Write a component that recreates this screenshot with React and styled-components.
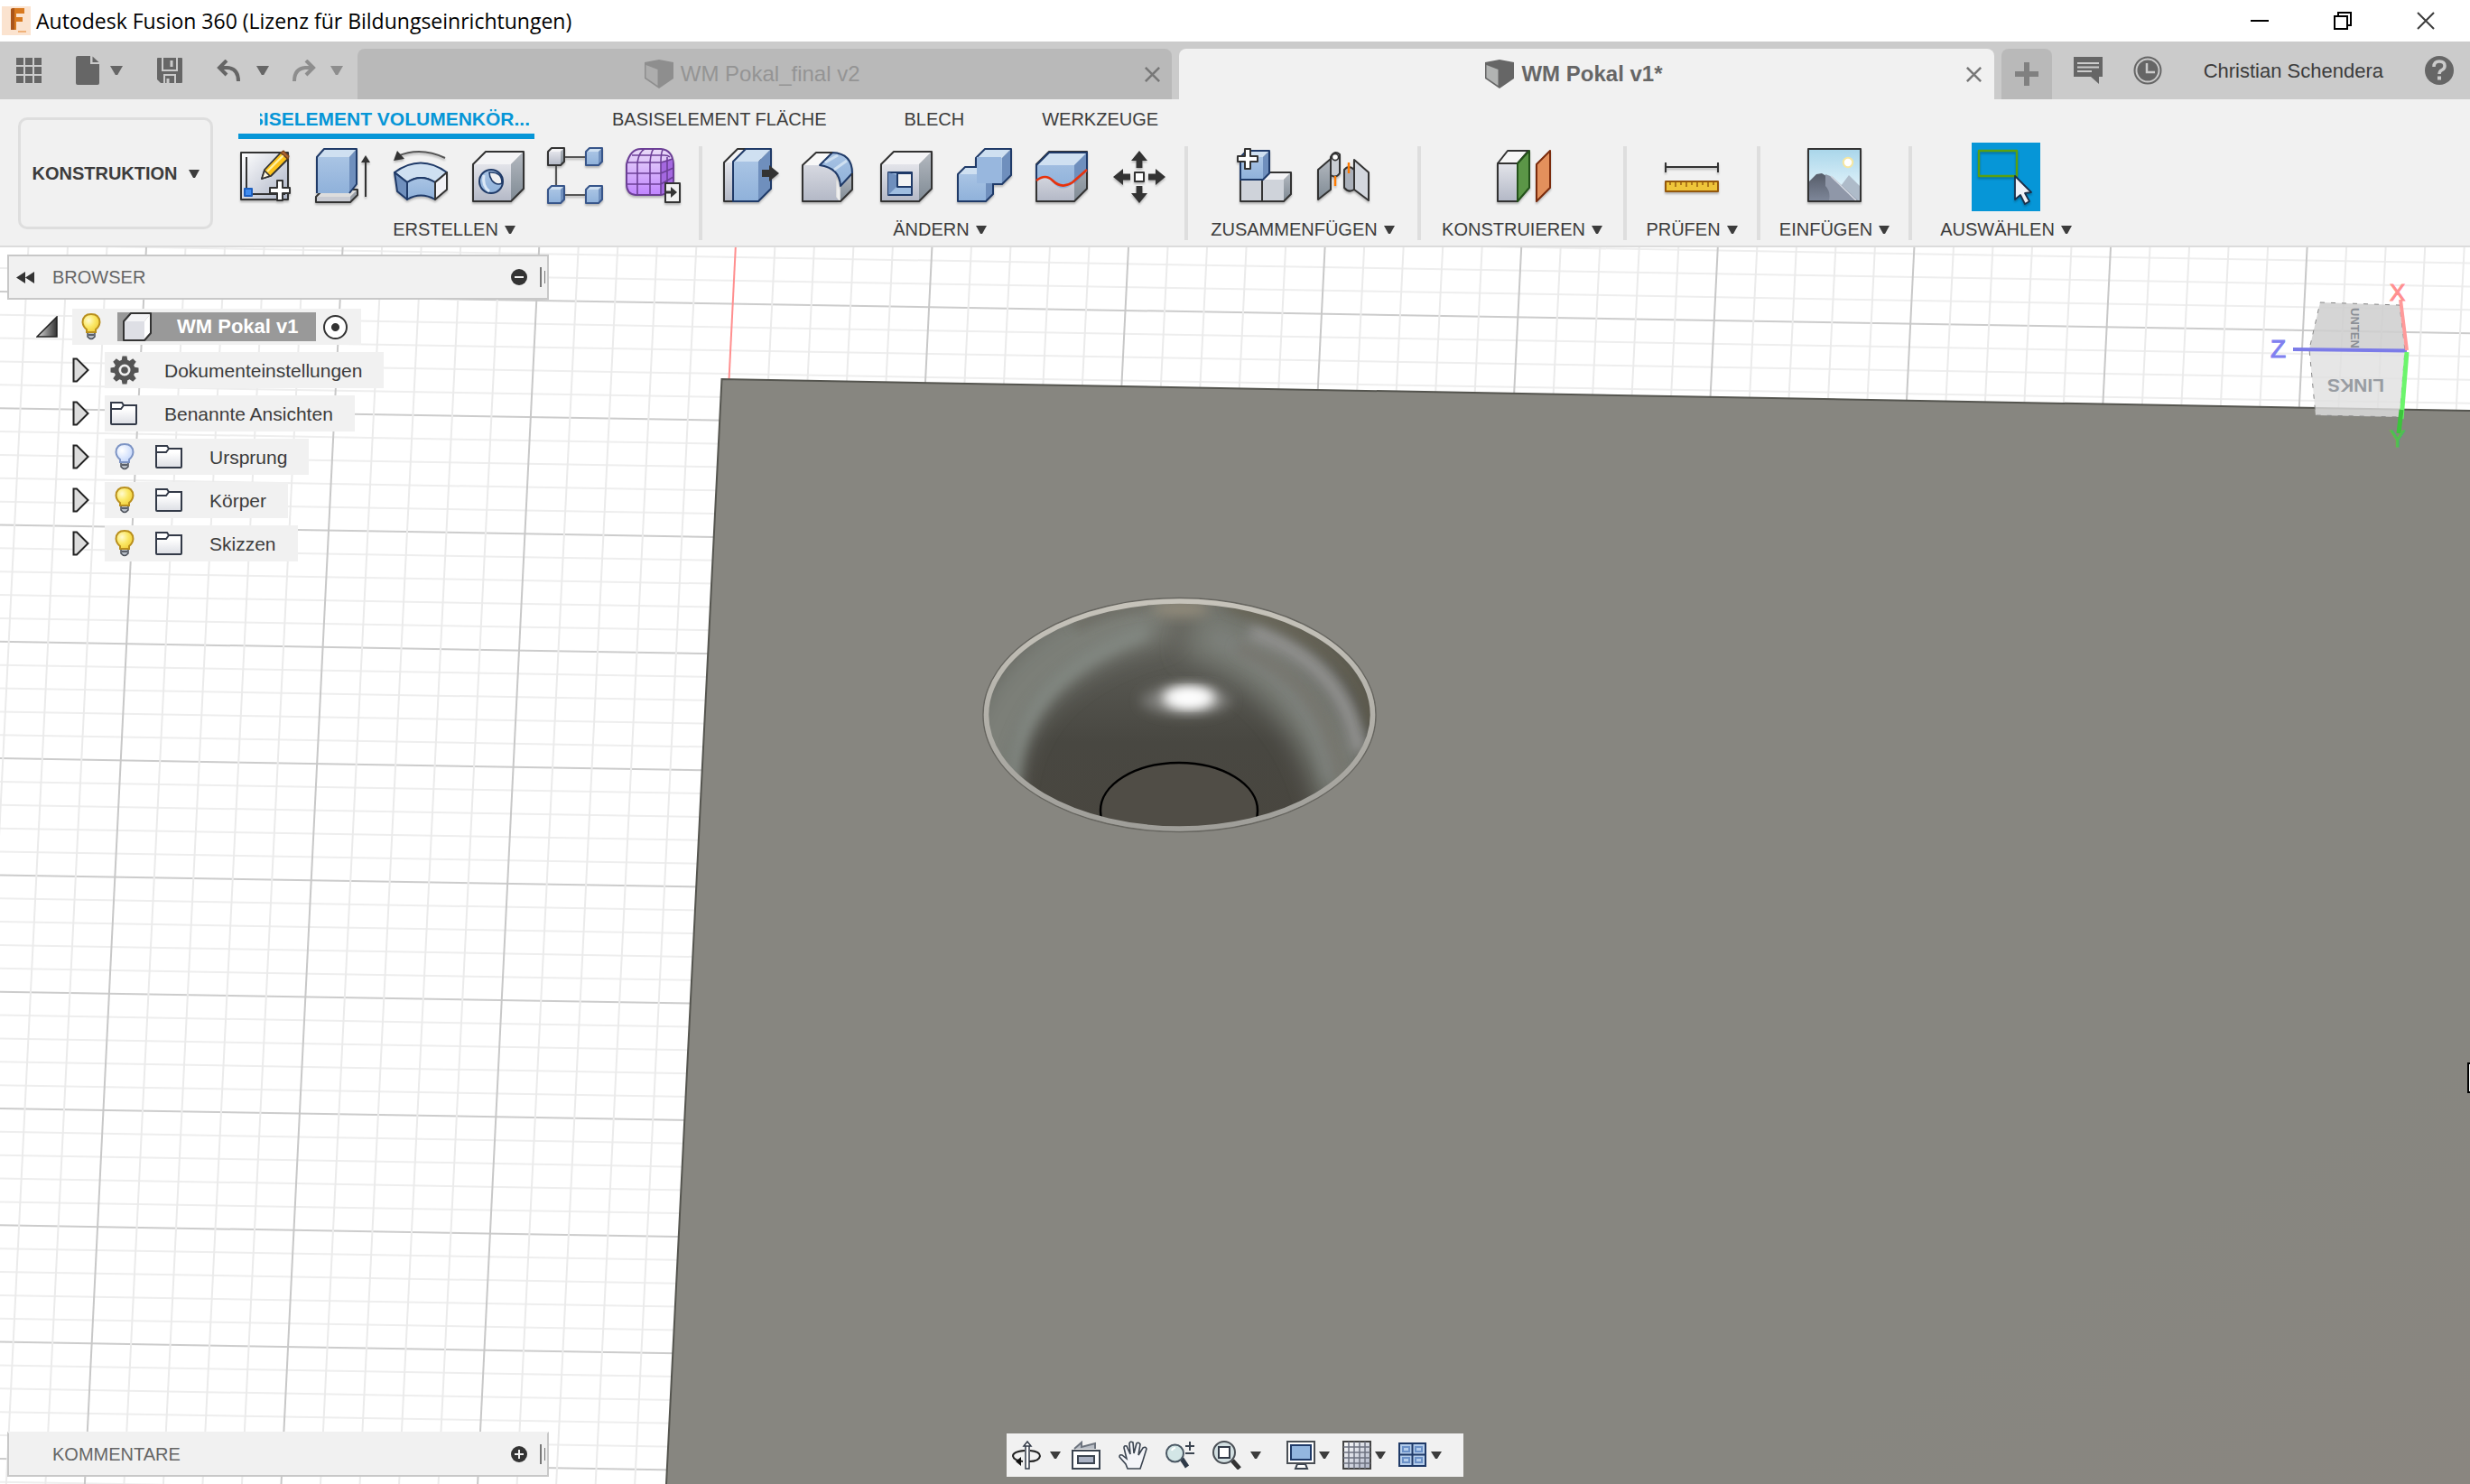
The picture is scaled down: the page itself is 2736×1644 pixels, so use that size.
import React from "react";
import styled, { createGlobalStyle, css } from "styled-components";

const Global = createGlobalStyle`
  * { box-sizing: border-box; }
  body {
    margin: 0;
    background: #ffffff;
    color: #3c3c3c;
    font-family: "Liberation Sans", Arial, sans-serif;
    font-size: 20px;
    line-height: 24px;
  }
  button {
    margin: 0;
    padding: 0;
    border: 0;
    background: none;
    color: inherit;
    font: inherit;
    cursor: pointer;
  }
  ul { margin: 0; padding: 0; list-style: none; }
  svg { display: block; flex: none; }
`;

/* ---------- layout ---------- */

const Page = styled.div`
  display: flex;
  flex-direction: column;
  min-height: 100vh;
`;

const TitleBar = styled.header`
  display: flex;
  align-items: center;
  height: 46px;
  padding: 0 3px 0 2px;
  gap: 6px;
  background: #ffffff;
`;

const Title = styled.h1`
  flex: 1;
  margin: 0;
  color: #000000;
  font: 400 23px/32px "Open Sans", "Noto Sans", sans-serif;
`;

const WindowButton = styled.button`
  display: flex;
  align-items: center;
  justify-content: center;
  width: 92px;
  height: 46px;
`;

const TabBar = styled.div`
  display: flex;
  height: 64px;
  background: #cbcbcb;
  color: #666666;
`;

const QuickAccess = styled.div`
  display: flex;
  align-items: center;
  gap: 38px;
  padding: 0 16px 0 18px;
`;

const ButtonCluster = styled.div`
  display: flex;
  align-items: center;
  gap: ${(p) => p.$gap}px;
`;

const PlainButton = styled.button`
  display: flex;
  align-items: center;
  gap: ${(p) => p.$gap || 0}px;
  color: ${(p) => (p.$muted ? "#8e8e8e" : "#666666")};
`;

const Documents = styled.div`
  flex: 1;
  display: flex;
  align-items: flex-end;
  gap: 8px;
`;

const DocumentTab = styled.div`
  flex: 1;
  display: flex;
  align-items: center;
  height: 56px;
  padding: 0 8px;
  border-radius: 8px 8px 0 0;
  background: ${(p) => (p.$active ? "#f1f1f1" : "#b9b9b9")};
  color: ${(p) => (p.$active ? "#666666" : "#949494")};
`;

const DocumentName = styled.button`
  flex: 1;
  display: flex;
  align-items: center;
  justify-content: center;
  gap: 8px;
  font-size: 24px;
  line-height: 28px;
  font-weight: ${(p) => (p.$active ? 700 : 400)};
`;

const TabClose = styled.button`
  display: flex;
  justify-content: center;
  width: 28px;
  color: #777777;
`;

const NewTab = styled.button`
  display: flex;
  align-items: center;
  justify-content: center;
  width: 56px;
  height: 56px;
  border-radius: 8px 8px 0 0;
  background: #b9b9b9;
  color: #808080;
`;

const Account = styled.div`
  display: flex;
  align-items: center;
  padding: 0 18px 0 24px;
  gap: 34px;
`;

const UserName = styled.button`
  padding: 2px 12px 0;
  color: #3c3c3c;
  font-size: 22px;
`;

const Ribbon = styled.div`
  display: flex;
  height: 164px;
  border-bottom: 2px solid #dcdcdc;
  background: #f1f1f1;
`;

const Workspace = styled.button`
  display: flex;
  align-items: center;
  justify-content: center;
  gap: 12px;
  width: 216px;
  height: 124px;
  margin: 20px 4px 0 20px;
  border: 3px solid #dedede;
  border-radius: 10px;
  font-weight: 700;
`;

const RibbonBody = styled.div`
  flex: 1;
  display: flex;
  flex-direction: column;
`;

const RibbonTabs = styled.div`
  display: flex;
  height: 44px;
  padding-left: 24px;
  gap: 86px;
`;

const RibbonTab = styled.button`
  display: flex;
  justify-content: flex-end;
  height: 44px;
  padding-top: 10px;
  white-space: nowrap;
  ${(p) =>
    p.$active &&
    css`
      width: 328px;
      padding-right: 5px;
      border-bottom: 6px solid #0696d7;
      color: #0696d7;
      font-size: 21px;
      font-weight: 700;
    `}
`;

const TabLabel = styled.span`
  display: flex;
  justify-content: flex-end;
  width: 299px;
  overflow: hidden;
`;

const Groups = styled.div`
  display: flex;
  padding-top: 8px;
`;

const Group = styled.div`
  display: flex;
  flex-direction: column;
  align-items: center;
  gap: 16px;
  width: ${(p) => p.$width}px;
  height: 104px;
  padding: ${(p) => (p.$wide ? "0 18px 0 10px" : "0")};
  border-right: ${(p) => (p.$last ? "0" : "4px solid #dedede")};
`;

const IconRow = styled.div`
  display: flex;
  gap: 22px;
  height: 64px;
  padding-left: ${(p) => (p.$wide ? 12 : 0)}px;
`;

const ToolButton = styled.button`
  display: flex;
  align-items: center;
  justify-content: center;
  height: 64px;
  width: 64px;
  svg { filter: drop-shadow(0 2px 1px rgba(0, 0, 0, 0.25)); }
`;

const SelectedTool = styled(ToolButton)`
  width: 76px;
  height: 76px;
  margin: -4px 0 -8px;
  background: #0696d7;
`;

const GroupLabel = styled.button`
  display: flex;
  align-items: center;
  gap: 7px;
  white-space: nowrap;
`;

const Viewport = styled.main`
  position: relative;
  flex: 1;
  display: flex;
  flex-direction: column;
  padding: 8px;
  overflow: hidden;
`;

const Scene = styled.svg`
  position: absolute;
  inset: 0;
  width: 100%;
  height: 100%;
`;

const CubeOverlay = styled.svg`
  position: absolute;
  top: 26px;
  right: 36px;
`;

const EdgeHandle = styled.div`
  position: absolute;
  top: 903px;
  right: 0;
  width: 3px;
  height: 34px;
  border: 2px solid #000000;
  border-right: 0;
  background: #ffffff;
`;

const Panel = styled.section`
  position: relative;
  display: flex;
  align-items: center;
  width: 600px;
  height: 50px;
  padding: 0 2px 0 8px;
  border: 2px solid #c8c8c8;
  border-top-color: ${(p) => (p.$open ? "#c8c8c8" : "#f1f1f1")};
  background: #f1f1f1;
`;

const PanelTitle = styled.h2`
  flex: 1;
  margin: 0;
  padding-left: ${(p) => (p.$indent ? 40 : 20)}px;
  color: #666666;
  font-size: 20px;
  font-weight: 400;
`;

const Grip = styled.span`
  display: flex;
  align-items: center;
  justify-content: space-between;
  width: 6px;
  margin-left: 14px;
  &::before,
  &::after {
    content: "";
    width: 2px;
    height: 22px;
    background: #777777;
  }
  &::after {
    width: 1px;
    height: 14px;
  }
`;

const Tree = styled.ul`
  position: relative;
  display: flex;
  flex-direction: column;
  gap: 8px;
  margin-top: 10px;
`;

const TreeRow = styled.li`
  display: flex;
  align-items: center;
  height: 40px;
  padding-left: ${(p) => (p.$root ? 32 : 72)}px;
  gap: ${(p) => (p.$root ? 16 : 17)}px;
`;

const Chip = styled.div`
  display: flex;
  align-items: center;
  gap: 18px;
  height: 40px;
  padding: ${(p) => (p.$root ? "0 15px 0 10px" : "0 24px 0 6px")};
  background: #f1f1f1;
`;

const IconSlot = styled.button`
  display: flex;
  justify-content: ${(p) => (p.$center ? "center" : "flex-start")};
  width: 32px;
`;

const NodeName = styled.button`
  padding: 2px 0 0 10px;
  font-size: 21px;
`;

const RootName = styled.button`
  display: flex;
  align-items: center;
  gap: 28px;
  height: 32px;
  padding: 0 20px 0 6px;
  background: #999999;
  color: #ffffff;
  font-size: 22px;
  font-weight: 700;
`;

const ActiveRadio = styled.input`
  appearance: none;
  width: 27px;
  height: 27px;
  margin: 0 0 0 -10px;
  border: 2px solid #333333;
  border-radius: 50%;
  background: radial-gradient(circle, #333333 4px, #ffffff 5px);
`;

const Footer = styled.div`
  position: relative;
  display: grid;
  grid-template-columns: 1fr auto 1fr;
  align-items: end;
  margin-top: auto;
`;

const NavBar = styled.div`
  display: flex;
  align-items: center;
  height: 48px;
  padding: 0 24px 0 6px;
  gap: 20px;
  background: #f1f1f1;
`;

const NavTools = styled.div`
  display: flex;
  gap: ${(p) => p.$gap}px;
  margin-left: ${(p) => p.$offset || 0}px;
`;

const NavButton = styled.button`
  display: flex;
  align-items: center;
  gap: ${(p) => p.$gap || 0}px;
`;

/* ---------- small icons ---------- */

const Caret = ({ w = 12, h = 9, color = "currentColor" }) => (
  <svg width={w} height={h} viewBox="0 0 12 9" preserveAspectRatio="none" aria-hidden="true">
    <path d="M0 0H12L7 9H5Z" fill={color} />
  </svg>
);

const AppLogo = () => (
  <svg width="32" height="32" viewBox="0 0 32 32" aria-hidden="true">
    <rect width="32" height="32" fill="#fbe3cf" />
    <path d="M10 4Q10 2 13 2H25V8H16V12H23V17H16V26H10Z" fill="#d8791f" />
    <path d="M10 4Q10 2 13 2H14V26H10Z" fill="#a9541a" />
    <path d="M18 27H27V29H18Z" fill="#f0b27a" />
  </svg>
);

const GridIcon = () => (
  <svg width="28" height="28" viewBox="0 0 28 28" aria-hidden="true">
    {[0, 10, 20].map((y) =>
      [0, 10, 20].map((x) => <rect key={`${x}-${y}`} x={x} y={y} width="8" height="8" fill="currentColor" />)
    )}
  </svg>
);

const FileIcon = () => (
  <svg width="26" height="32" viewBox="0 0 26 32" aria-hidden="true">
    <path d="M2 0H16V9H26V30Q26 32 24 32H2Q0 32 0 30V2Q0 0 2 0Z" fill="currentColor" />
    <path d="M18.5 0.5L25.5 7H18.5Z" fill="currentColor" />
  </svg>
);

const SaveIcon = () => (
  <svg width="28" height="28" viewBox="0 0 28 28" aria-hidden="true">
    <path d="M1 0H27Q28 0 28 1V27Q28 28 27 28H4L0 24V1Q0 0 1 0Z" fill="currentColor" />
    <path d="M6 0V14H22V0M8 28V19H20V28" fill="none" stroke="#cbcbcb" strokeWidth="2" />
    <path d="M16 3V10M12 23V28" stroke="#cbcbcb" strokeWidth="3" />
  </svg>
);

const UndoIcon = () => (
  <svg width="26" height="24" viewBox="0 0 26 24" fill="none" stroke="currentColor" strokeWidth="4" aria-hidden="true">
    <path d="M11 1L3 9L11 17M3 9H12Q24 10 24 24" />
  </svg>
);

const RedoIcon = () => (
  <svg width="26" height="24" viewBox="0 0 26 24" fill="none" stroke="currentColor" strokeWidth="4" aria-hidden="true">
    <path d="M15 1L23 9L15 17M23 9H14Q2 10 2 24" />
  </svg>
);

const DocCube = ({ active }) => (
  <svg width="32" height="32" viewBox="0 0 32 32" aria-hidden="true">
    <path d="M0 3L16 0L32 3V21L16 32L0 21Z" fill={active ? "#666666" : "#8e8e8e"} />
    <path d="M1.500 6L14.500 11V29L1.500 20Z" fill={active ? "#b2b4b3" : "#adadad"} />
  </svg>
);

const CrossIcon = ({ size = 17, stroke = 3 }) => (
  <svg width={size} height={size} viewBox="0 0 20 20" fill="none" stroke="currentColor" strokeWidth={stroke} aria-hidden="true">
    <path d="M1 1L19 19M19 1L1 19" />
  </svg>
);

const PlusIcon = () => (
  <svg width="26" height="26" viewBox="0 0 26 26" stroke="currentColor" strokeWidth="6" aria-hidden="true">
    <path d="M13 0V26M0 13H26" />
  </svg>
);

const CommentIcon = () => (
  <svg width="32" height="30" viewBox="0 0 32 30" aria-hidden="true">
    <path d="M0 0H32V22H28V30L19 22H0Z" fill="currentColor" />
    <path d="M4 7H28M4 11.500H28M4 16H20" stroke="#cbcbcb" strokeWidth="2" />
  </svg>
);

const ClockIcon = () => (
  <svg width="32" height="32" viewBox="0 0 32 32" aria-hidden="true">
    <circle cx="16" cy="16" r="14.500" fill="none" stroke="currentColor" strokeWidth="2" />
    <circle cx="16" cy="16" r="11.500" fill="currentColor" />
    <path d="M15 8V18H24" fill="none" stroke="#cbcbcb" strokeWidth="2.500" />
  </svg>
);

const HelpIcon = () => (
  <svg width="32" height="32" viewBox="0 0 32 32" aria-hidden="true">
    <circle cx="16" cy="16" r="16" fill="currentColor" />
    <path d="M10 12Q10 6 16 6Q22 6 22 11Q22 14 19 15.500Q16 17 16 20" fill="none" stroke="#cbcbcb" strokeWidth="3.500" />
    <rect x="14" y="22.500" width="4" height="4" fill="#cbcbcb" />
  </svg>
);

/* ---------- ribbon icons ---------- */

const Tool = ({ children, size = 64 }) => (
  <svg width={size} height={size} viewBox="0 0 32 32" strokeLinejoin="round" aria-hidden="true">
    {children}
  </svg>
);

const dark = "#333333";
const navy = "#1f3a68";

const HiddenDefs = styled.svg`
  position: absolute;
`;

const Defs = () => (
  <HiddenDefs width="0" height="0" aria-hidden="true">
    <defs>
      <linearGradient id="gGray" x1="0" y1="0" x2="0" y2="1">
        <stop offset="0" stopColor="#e3e4ea" /><stop offset="1" stopColor="#b3b8c6" />
      </linearGradient>
      <linearGradient id="gPaper" x1="0" y1="0" x2="1" y2="1">
        <stop offset="0" stopColor="#ffffff" /><stop offset="1" stopColor="#adb4c6" />
      </linearGradient>
      <linearGradient id="gFolder" x1="0" y1="0" x2="0" y2="1">
        <stop offset="0.3" stopColor="#ffffff" /><stop offset="1" stopColor="#dcdee4" />
      </linearGradient>
      <linearGradient id="gBlue" x1="0" y1="0" x2="0" y2="1">
        <stop offset="0" stopColor="#a9c4e4" /><stop offset="1" stopColor="#8fb1da" />
      </linearGradient>
      <linearGradient id="gSide" x1="0" y1="0" x2="0" y2="1">
        <stop offset="0" stopColor="#b4b9c0" /><stop offset="1" stopColor="#7f8a94" />
      </linearGradient>
      <linearGradient id="gForm" x1="0" y1="0" x2="0" y2="1">
        <stop offset="0" stopColor="#eadcf8" /><stop offset="1" stopColor="#c084ff" />
      </linearGradient>
      <linearGradient id="gSky" x1="0" y1="0" x2="0" y2="1">
        <stop offset="0" stopColor="#a9d6ea" /><stop offset="1" stopColor="#f2fbff" />
      </linearGradient>
      <linearGradient id="gMount" x1="0" y1="0" x2="0" y2="1">
        <stop offset="0" stopColor="#565c69" /><stop offset="1" stopColor="#7d8698" />
      </linearGradient>
      <linearGradient id="gMark" x1="0" y1="0" x2="1" y2="0">
        <stop offset="0" stopColor="#dddddd" /><stop offset="1" stopColor="#333333" />
      </linearGradient>
      <radialGradient id="gBulbOn" cx="0.35" cy="0.35" r="0.7">
        <stop offset="0" stopColor="#fffbd0" /><stop offset="0.5" stopColor="#fbe96a" /><stop offset="1" stopColor="#f1cf38" />
      </radialGradient>
      <radialGradient id="gBulbOff" cx="0.35" cy="0.35" r="0.7">
        <stop offset="0" stopColor="#ffffff" /><stop offset="1" stopColor="#c3d6fb" />
      </radialGradient>
    </defs>
  </HiddenDefs>
);

/* Extruded block: front face, top face, right face. */
const Block = ({ x = 2, y = 3, w = 28, h = 27.5, d = 7, front = "url(#gGray)", top = "#f4f4f6", side = "url(#gSide)", line = dark }) => (
  <g>
    <path d={`M${x} ${y + d}L${x + d} ${y}H${x + w}L${x + w - d} ${y + d}Z`} fill={top} />
    <path d={`M${x + w - d} ${y + d}L${x + w} ${y}V${y + h - d}L${x + w - d} ${y + h}Z`} fill={side} />
    <rect x={x} y={y + d} width={w - d} height={h - d} fill={front} />
    <path d={`M${x} ${y + d}L${x + d} ${y}H${x + w}V${y + h - d}L${x + w - d} ${y + h}H${x}Z`} fill="none" stroke={line} />
  </g>
);

const Plus = ({ x, y }) => (
  <path
    d={`M${x - 1.500} ${y - 5.500}h3v4h4v3h-4v4h-3v-4h-4v-3h4z`}
    fill="#ffffff"
    stroke={dark}
    strokeWidth="1"
  />
);

const SketchIcon = () => (
  <Tool>
    <rect x="2.500" y="3.500" width="26" height="26" fill="url(#gPaper)" stroke={dark} />
    <path d="M5.500 6V26.500H27" fill="none" stroke={dark} />
    <rect x="4.500" y="23.500" width="4" height="4" fill="#3f8cf0" stroke="#1d5fc0" />
    <path d="M14 18L15.500 13L24.500 3.500L28.500 7L19 16.500Z" fill="#fcc21a" stroke={dark} strokeWidth="0.900" />
    <path d="M17 14L26 5" stroke="#fff0a0" strokeWidth="1.200" />
    <path d="M24.500 3.500L26 2.500L29 5.500L28.500 7Z" fill="#b0652f" stroke="#7a4620" strokeWidth="0.600" />
    <path d="M14 18L15.500 13.500L18.500 16.500Z" fill="#fff7e0" stroke={dark} strokeWidth="0.800" />
    <Plus x={24} y={24.5} />
  </Tool>
);

const ExtrudeIcon = () => (
  <Tool>
    <Block x={1} y={24} w={23} h={7} d={4} front="#c9cbd2" top="#dddddd" side="#9aa0a8" />
    <path d="M1.500 6L5.500 1.500H23.500L19.500 6Z" fill="#cfe0f1" />
    <rect x="1.500" y="6" width="18" height="20" fill="url(#gBlue)" />
    <path d="M19.500 6L23.500 1.500V21L19.500 26Z" fill="#6f8fbd" />
    <path d="M1.500 26V6L5.500 1.500H23.500V21L19.500 26" fill="none" stroke={navy} />
    <path d="M28.500 28V8" stroke={dark} strokeWidth="1" />
    <path d="M28.500 5L31 9H26Z" fill={dark} />
  </Tool>
);

const RevolveIcon = () => (
  <Tool>
    <path d="M3 5.500Q16 0 29.500 6.500" fill="none" stroke="#555555" />
    <path d="M1 8L3 2.500L7 7Z" fill={dark} />
    <path d="M1.500 14.500Q16 4 30.500 14.500L24 20Q16 15 8.500 20Z" fill="#cfe0f1" stroke={navy} />
    <path d="M1.500 14.500L8.500 20V29.500L3 25Z" fill="#6f8fbd" stroke={navy} />
    <path d="M8.500 20Q16 15 24 20V29.500Q16 25 8.500 29.500Z" fill="url(#gBlue)" stroke={navy} />
    <path d="M24 20L30.500 14.500V24L24 29.500Z" fill="#f2f2f6" stroke={dark} />
  </Tool>
);

const HoleIcon = () => (
  <Tool>
    <Block />
    <ellipse cx="12" cy="19.500" rx="6.500" ry="6.500" fill="url(#gBlue)" stroke={navy} />
    <path d="M11 14.500Q18 14 18 20.500Q15 22 12.500 19Q11 17 11 14.500Z" fill="#f0f0f2" stroke={navy} strokeWidth="0.800" />
    <path d="M8 16Q7 22 11 25" stroke="#dbe8f6" fill="none" strokeWidth="1.500" />
  </Tool>
);

const PatternIcon = () => (
  <Tool>
    <path d="M10 6H22M5 11V22M10 27H22" stroke="#555555" strokeWidth="1" />
    <Block x={0.5} y={1} w={9} h={9.5} d={2} />
    <Block x={21.5} y={1} w={9} h={9.5} d={2} front="url(#gBlue)" top="#cfe0f1" side="#6f8fbd" line="#37558a" />
    <Block x={0.5} y={22} w={9} h={9.5} d={2} front="url(#gBlue)" top="#cfe0f1" side="#6f8fbd" line="#37558a" />
    <Block x={21.5} y={22} w={9} h={9.5} d={2} front="url(#gBlue)" top="#cfe0f1" side="#6f8fbd" line="#37558a" />
  </Tool>
);

const FormIcon = () => (
  <Tool>
    <path d="M1 10Q3 1.500 9 1.500H20Q26.500 2 27 10V19Q26 26 20 27H6Q1 26.500 1 21Z" fill="url(#gForm)" stroke="#6c3f96" />
    <path d="M20 9Q25 6 26.500 8V20Q25 25 20 26.500Z" fill="#a468e0" />
    <path d="M7 26.500V9Q8 3 11 1.500M14 26.500V9Q14.500 3 16 1.500M20 26.500V9Q20 4 21 2M1 9H20Q24 8 26.500 7M1 15H20L27 12M1 21H20L27 17M4 5H22Q24 5 25 6M23.500 25V6" fill="none" stroke="#6c3f96" strokeWidth="0.800" />
    <rect x="22.500" y="20.500" width="8" height="10.500" fill="#f1f1f1" stroke={dark} strokeWidth="1" />
    <path d="M23 25.500H27" stroke={dark} strokeWidth="1.500" />
    <path d="M25.500 22.500L29 25.500L25.500 28.500Z" fill={dark} />
  </Tool>
);

const PressPullIcon = () => (
  <Tool>
    <Block x={1} y={1.500} w={20} h={29} d={7.500} />
    <Block x={6} y={1.500} w={21} h={29} d={7} front="url(#gBlue)" top="#cfe0f1" side="#6f8fbd" line={navy} />
    <path d="M22 13H26V10.500L31.500 15L26 19.500V17H22Z" fill={dark} />
  </Tool>
);

const FilletIcon = () => (
  <Tool>
    <path d="M1.500 10.500L9 3.500H20V28L22 30.500H1.500Z" fill="url(#gGray)" />
    <path d="M1.500 10.500L9 3.500H18L11 10.500Z" fill="#f8f8f8" />
    <path d="M22.500 22L29 15V24L22.500 30.500Z" fill="url(#gSide)" />
    <path d="M11 10.500L18 3.500Q29 4 29 15L22.500 22Q22 12 11 10.500Z" fill="url(#gBlue)" stroke={navy} />
    <path d="M14 9L21 5M19 13L26 8" stroke="#cfe0f1" strokeWidth="1.500" />
    <path d="M29 15V24L22.500 30.500H1.500V10.500L9 3.500H18" fill="none" stroke={dark} />
  </Tool>
);

const ShellIcon = () => (
  <Tool>
    <Block />
    <rect x="6" y="14.500" width="13" height="12.500" fill="#9fbde0" stroke={navy} />
    <path d="M6 14.500L11 16V22L6 27Z" fill="#6f8fbd" />
    <rect x="11" y="15" width="8" height="7.500" fill="#f4f4f4" stroke={navy} />
  </Tool>
);

const CombineIcon = () => (
  <Tool>
    <Block x={11.5} y={1.500} w={19.5} h={19.500} d={5} front="url(#gBlue)" top="#cfe0f1" side="#6f8fbd" line={navy} />
    <Block x={1.5} y={11.500} w={19.5} h={19} d={4} front="url(#gBlue)" top="#cfe0f1" side="#6f8fbd" line={navy} />
    <rect x="12" y="6" width="13.500" height="14.500" fill="#98b7de" />
    <path d="M11.500 11.500V6.500" stroke={navy} />
  </Tool>
);

const SplitIcon = () => (
  <Tool>
    <Block />
    <path d="M2 19V10.500L9 3.500H30V14L22 21Q16 26 11 20Q7 15 2 19Z" fill="url(#gBlue)" />
    <path d="M2 10.500L9 3.500H30L23 10.500Z" fill="#cfe0f1" />
    <path d="M23 10.500L30 3.500V14L23 21Z" fill="#6f8fbd" />
    <path d="M2 19V10.500L9 3.500H30V14" fill="none" stroke={navy} />
    <path d="M2 19Q7 15 11 19Q16 24 22 20L30 13" fill="none" stroke="#e8320c" strokeWidth="1.300" />
  </Tool>
);

const MoveIcon = () => (
  <Tool>
    <path d="M16 2.500L20.500 8H17.700V12H14.300V8H11.500ZM16 31.500L20.500 26H17.700V22H14.300V26H11.500ZM1.500 17L7 12.500V15.300H11V18.700H7V21.500ZM30.500 17L25 12.500V15.300H21V18.700H25V21.500Z" fill={dark} />
    <rect x="13.500" y="14.500" width="5" height="5" fill="#ffffff" stroke={dark} />
  </Tool>
);

const ComponentIcon = () => (
  <Tool>
    <Block x={14.5} y={14.500} w={16.5} h={16} d={4} front="#cfd3da" />
    <rect x="3" y="18.500" width="12" height="12" fill="#cfd3da" stroke={dark} />
    <Block x={3} y={2.500} w={16} h={16} d={3.500} front="url(#gBlue)" top="#cfe0f1" side="#6f8fbd" line={navy} />
    <Plus x={7} y={7} />
  </Tool>
);

const JointIcon = () => (
  <Tool>
    <path d="M3 13L10 7V24L3 29.500Z" fill="url(#gSide)" stroke={dark} />
    <path d="M10 6Q12 2 15 4.500V15Q13 18 10 16Z" fill="#c9cdd3" stroke={dark} />
    <ellipse cx="12.500" cy="6" rx="1.800" ry="1.800" fill="#ffffff" stroke={dark} strokeWidth="0.800" />
    <path d="M17.500 13Q20 10 23 13V24Q20 26 17.500 23Z" fill="#aab0ba" stroke={dark} />
    <path d="M23 7.500L31 14.500V30L23 24Z" fill="#d3d7de" stroke={dark} />
    <path d="M12.500 16.500V22M20 9V15" stroke="#ff7a00" strokeWidth="1.200" />
  </Tool>
);

const PlaneIcon = () => (
  <Tool>
    <path d="M2.500 9.500L8 2.500H19.500L13.500 9.500Z" fill="#f6f6f6" stroke={dark} />
    <rect x="2.500" y="9.500" width="11" height="21" fill="url(#gGray)" stroke={dark} />
    <path d="M13.500 9.500L20 2.500V23L13.500 30.500Z" fill="#5b9647" stroke="#23511a" />
    <path d="M24 10L31.500 2.500V23L24 30.500Z" fill="#e3905c" stroke="#7a2b0c" />
  </Tool>
);

const MeasureIcon = () => (
  <Tool>
    <path d="M1.500 11.500H30.500M1.500 9V14.500M30.500 9V14.500" stroke={dark} strokeWidth="1" />
    <rect x="1.500" y="19.500" width="29" height="5.500" fill="#efc53a" stroke="#94580c" />
    <path d="M4 20V21.500M7 20V22.500M10 20V21.500M13 20V22.500M16 20V21.500M19 20V22.500M22 20V21.500M25 20V22.500M28 20V21.500" stroke="#94580c" strokeWidth="0.700" />
  </Tool>
);

const PictureIcon = () => (
  <Tool>
    <rect x="1.500" y="1.500" width="29" height="29" fill="url(#gSky)" />
    <path d="M18 24L24 16L30 22V30H18Z" fill="#aebbc9" />
    <path d="M1.500 20L6 15.500L9 15L14 18L26 30H1.500Z" fill="url(#gMount)" />
    <path d="M11 15.500L15 17L29 30H13Q14 25 11 22Z" fill="#8f97a8" />
    <path d="M14 16.500L28 30" stroke="#d4d9e2" strokeWidth="0.800" />
    <circle cx="23.500" cy="9" r="2.600" fill="#ffffff" stroke="#f5e6a0" strokeWidth="1" />
    <rect x="1.500" y="1.500" width="29" height="29" fill="none" stroke={dark} />
  </Tool>
);

const SelectIcon = () => (
  <Tool>
    <rect x="1" y="1.500" width="21" height="14" fill="none" stroke="#5aa00f" strokeWidth="1.200" />
    <path d="M21 15.500V28.500L24 26L26.500 31L29 29.500L26.500 25L30 24.500Z" fill="#f0f2f8" stroke="#1b2f4a" strokeWidth="0.900" />
  </Tool>
);

/* ---------- browser tree icons ---------- */

const Bulb = ({ on }) => (
  <svg width="22" height="30" viewBox="0 0 22 30" aria-hidden="true">
    <path d="M7 20H15V26Q11 31 7 26Z" fill="#b9bfc8" stroke="#4a4f58" strokeWidth="1.500" />
    <path d="M11 1Q20 1 20.500 10Q20 15 16 18V21H6V18Q2 15 1.500 10Q2 1 11 1Z" fill={on ? "url(#gBulbOn)" : "url(#gBulbOff)"} stroke={on ? "#b98f1d" : "#7d94c4"} strokeWidth="2" />
    <path d="M8 24H14" stroke="#5a5f68" strokeWidth="2" />
  </svg>
);

const Folder = () => (
  <svg width="30" height="26" viewBox="0 0 30 26" aria-hidden="true">
    <path d="M1 1H13L15 4H29V25H1Z" fill="url(#gFolder)" />
    <path d="M1 1H13L15 4H29V24Q29 25 28 25H2Q1 25 1 24ZM1 8H12L15 4" fill="none" stroke="#333a48" strokeWidth="2" />
  </svg>
);

const Gear = () => (
  <svg width="32" height="32" viewBox="0 0 32 32" aria-hidden="true">
    <circle cx="16" cy="16" r="9" fill="none" stroke="#555555" strokeWidth="5" />
    <circle cx="16" cy="16" r="3.800" fill="#555555" />
    {[0, 45, 90, 135, 180, 225, 270, 315].map((a) => (
      <path key={a} d="M13.500 0.500H18.500L19.500 6H12.500Z" fill="#555555" transform={`rotate(${a} 16 16)`} />
    ))}
  </svg>
);

const BodyCube = () => (
  <svg width="32" height="32" viewBox="0 0 32 32" strokeLinejoin="round" aria-hidden="true">
    <path d="M1 10L9 1H31L24 10V31H1Z" fill="#f4f4f6" />
    <path d="M24 10L31 1V23L24 31Z" fill="#ffffff" />
    <path d="M1 10H24V31H1Z" fill="#dedfe5" />
    <path d="M1 10L9 1H31V23L24 31H1Z" fill="none" stroke="#333333" strokeWidth="2" />
  </svg>
);

const Expander = () => (
  <svg width="19" height="28" viewBox="0 0 19 28" aria-hidden="true">
    <path d="M1.500 1.500H5L17.500 14L5 26.500H1.500Z" fill="#dcdcdc" stroke="#222222" strokeWidth="2" />
  </svg>
);

const Collapser = () => (
  <svg width="24" height="24" viewBox="0 0 24 24" aria-hidden="true">
    <path d="M1 23L23 1V23Z" fill="url(#gMark)" stroke="#222222" strokeWidth="1.500" />
  </svg>
);

const Rewind = () => (
  <svg width="20" height="13" viewBox="0 0 20 13" aria-hidden="true">
    <path d="M0 6.500L10 0V13ZM10 6.500L20 0V13Z" fill="#333333" />
  </svg>
);

const RoundSign = ({ plus }) => (
  <svg width="18" height="18" viewBox="0 0 18 18" aria-hidden="true">
    <circle cx="9" cy="9" r="9" fill="#333333" />
    <path d={plus ? "M4 9H14M9 4V14" : "M4 9H14"} stroke="#f1f1f1" strokeWidth="2" />
  </svg>
);

/* ---------- navigation icons ---------- */

const Nav = ({ children }) => (
  <svg width="32" height="32" viewBox="0 0 32 32" fill="none" stroke="#3b4450" strokeWidth="2" aria-hidden="true">
    {children}
  </svg>
);

const OrbitIcon = () => (
  <Nav>
    <path d="M14 11Q1 12 1 17Q2 22 12 23M20 11Q31 12 31 17Q30 23 19 23" stroke="#222222" />
    <path d="M4 23L10 18V28Z" fill="#111111" stroke="none" />
    <path d="M15 31V6H19V31ZM13 6L17 1L21 6Z" fill="#ffffff" stroke="#333b48" strokeWidth="1.500" />
  </Nav>
);

const LookAtIcon = () => (
  <Nav>
    <path d="M3 9L11 2V7L26 3V9" fill="#b9bec6" stroke="#6d747e" />
    <rect x="1" y="11" width="30" height="20" fill="#ffffff" />
    <rect x="7" y="17" width="18" height="8" fill="#aab2c4" />
  </Nav>
);

const PanIcon = () => (
  <Nav>
    <path d="M10 31L8 26L1 18Q1 15 4 16L9 20L6 8Q6 5 9 6L13 15L12 3Q13 0 16 2L17 14L20 3Q22 1 24 4L22 16L27 8Q30 6 31 9L27 22L24 31Z" fill="#f4f5f9" strokeWidth="1.600" />
  </Nav>
);

const ZoomIcon = () => (
  <Nav>
    <path d="M18 20L24 29" stroke="#2f3a48" strokeWidth="5" />
    <circle cx="10.500" cy="14" r="9.500" fill="#d3e6e6" stroke="#4a5763" />
    <path d="M7 11Q8 8 11 8" stroke="#ffffff" />
    <path d="M22 6H32M27 1V11M22 14H32" />
  </Nav>
);

const FitIcon = () => (
  <Nav>
    <path d="M22 22L30 31" stroke="#333333" strokeWidth="5" />
    <circle cx="13" cy="13" r="12" fill="#d3e0e2" stroke="#4a4f55" />
    <rect x="7" y="7" width="12" height="12" fill="#ffffff" stroke="#333b48" />
  </Nav>
);

const DisplayIcon = () => (
  <Nav>
    <path d="M10 31H23L21 26H12Z" fill="#ffffff" />
    <rect x="1" y="1" width="30" height="24" fill="#ffffff" stroke="#4a4f55" />
    <rect x="5" y="5" width="22" height="16" fill="#93b6df" stroke={navy} />
  </Nav>
);

const GridSettingsIcon = () => (
  <Nav>
    <rect x="1" y="1" width="30" height="30" fill="url(#gPaper)" stroke="#444444" />
    <path d="M7 1V31M13 1V31M19 1V31M25 1V31M1 7H31M1 13H31M1 19H31M1 25H31" stroke="#6d7280" strokeWidth="1.500" />
  </Nav>
);

const ViewsIcon = () => (
  <Nav>
    <rect x="1" y="3" width="29" height="25" fill="#b4cdeb" stroke={navy} />
    <path d="M15.500 3V28M1 15.500H30" stroke={navy} />
    <path d="M5 7H12V12H5ZM19 7H26V12H19ZM5 19H12V24H5ZM19 19H26V24H19Z" stroke="#6b91c8" />
  </Nav>
);

/* ---------- 3D scene ---------- */

const range = (n) => Array.from({ length: n }, (_, i) => i);

/* Vertical lines lean by 0.0497 px per px, horizontal ones drop by 0.0169. */
const verticals = range(70).map((i) => {
  const k = i - 20;
  const top = 814.8 + k * 43.52;
  return { x1: top, x2: top - 1370 * 0.0497, major: k % 5 === 0, axis: k === 0 };
});
const horizontals = range(62).map((i) => {
  const k = i - 5;
  const y = 48.9 + k * 25.86;
  return { y1: y, y2: y + 2736 * 0.0169, major: k % 5 === 0 };
});

const ModelScene = () => (
  <Scene viewBox="0 0 2736 1370" preserveAspectRatio="xMinYMin slice" role="img" aria-label="3D-Modell">
    <defs>
      <linearGradient id="bowlBase" x1="0" y1="0" x2="0" y2="1">
        <stop offset="0" stopColor="#6b6a62" />
        <stop offset="0.3" stopColor="#585852" />
        <stop offset="0.6" stopColor="#484741" />
        <stop offset="1" stopColor="#49463f" />
      </linearGradient>
      <linearGradient id="bowlRim" x1="0" y1="0" x2="0" y2="1">
        <stop offset="0" stopColor="#c6c3ba" />
        <stop offset="1" stopColor="#9f9e99" />
      </linearGradient>
      <linearGradient id="plate" x1="0" y1="0" x2="1" y2="1">
        <stop offset="0" stopColor="#878680" />
        <stop offset="0.8" stopColor="#878680" />
        <stop offset="1" stopColor="#8a8680" />
      </linearGradient>
      <clipPath id="bowlClip"><ellipse cx="1306.500" cy="518" rx="214" ry="126" /></clipPath>
      <filter id="soft" x="-50%" y="-50%" width="200%" height="200%"><feGaussianBlur stdDeviation="14" /></filter>
      <filter id="softer" x="-50%" y="-50%" width="200%" height="200%"><feGaussianBlur stdDeviation="7" /></filter>
    </defs>
    <rect width="2736" height="1370" fill="#ffffff" />
    {horizontals.map((l, i) => (
      <line key={`h${i}`} x1="0" x2="2736" y1={l.y1} y2={l.y2} stroke={l.major ? "#cccccc" : "#eeeeee"} strokeWidth="2" />
    ))}
    {verticals.map((l, i) => (
      <line key={`v${i}`} x1={l.x1} x2={l.x2} y1="0" y2="1370" stroke={l.axis ? "#ff8f8f" : l.major ? "#c8c8c8" : "#ebebeb"} strokeWidth="2" />
    ))}
    <path d="M799.500 146L2736 181V1370H738Z" fill="url(#plate)" />
    <path d="M738 1370L799.500 146L2736 181" fill="none" stroke="#55554f" strokeWidth="2" />

    <g clipPath="url(#bowlClip)">
      <rect x="1080" y="380" width="460" height="280" fill="url(#bowlBase)" />
      <path d="M1085 640Q1082 450 1290 400" fill="none" stroke="#7b7f78" strokeWidth="68" filter="url(#soft)" />
      <path d="M1122 600Q1120 480 1270 426" fill="none" stroke="#838983" strokeWidth="14" filter="url(#softer)" />
      <path d="M1320 420Q1470 470 1500 640" fill="none" stroke="#787b74" strokeWidth="64" filter="url(#soft)" />
      <path d="M1345 432Q1455 480 1475 590" fill="none" stroke="#7d807b" strokeWidth="16" filter="url(#softer)" />
      <path d="M1385 425Q1490 460 1506 560" fill="none" stroke="#929290" strokeWidth="18" filter="url(#softer)" />
      <path d="M1370 444Q1470 480 1486 590" fill="none" stroke="#757169" strokeWidth="8" filter="url(#softer)" />
      <path d="M1360 396Q1510 440 1520 530" fill="none" stroke="#66624f" strokeWidth="9" filter="url(#softer)" />
      <path d="M1190 420Q1230 398 1276 396" fill="none" stroke="#66645a" strokeWidth="8" filter="url(#softer)" />
      <ellipse cx="1308" cy="400" rx="32" ry="10" fill="#908a7a" filter="url(#softer)" />
      <ellipse cx="1314" cy="502" rx="50" ry="16" fill="#7b7b78" filter="url(#softer)" />
      <ellipse cx="1317" cy="499" rx="30" ry="12" fill="#ffffff" filter="url(#softer)" />
      <ellipse cx="1317" cy="499" rx="20" ry="8" fill="#ffffff" filter="url(#softer)" />
      <ellipse cx="1306" cy="624" rx="87" ry="53" fill="#504d46" stroke="#000000" strokeWidth="2.500" />
    </g>
    <ellipse cx="1306.500" cy="518" rx="217.500" ry="129.500" fill="none" stroke="#66655f" strokeWidth="1.500" />
    <ellipse cx="1306.500" cy="518" rx="214" ry="126" fill="none" stroke="url(#bowlRim)" strokeWidth="5.500" />
  </Scene>
);

const ViewCube = () => (
  <CubeOverlay width="200" height="200" viewBox="0 0 200 200" role="img" aria-label="ViewCube">
    <path d="M70 35L158 38L164 88L58 87Z" fill="#cecece" fillOpacity="0.850" />
    <path d="M58 87L164 88L158 162L65 160Z" fill="#e0e0e0" fillOpacity="0.800" />
    <path d="M70 35L158 38L164 88L158 162L65 160L58 87Z" fill="none" stroke="#888888" strokeDasharray="5 7" />
    <text transform="translate(104 41) rotate(90)" fontSize="13" fontWeight="700" fill="#8b8f96">UNTEN</text>
    <text transform="translate(141 120) rotate(180)" fontSize="21" fontWeight="700" fill="#989ca2">LINKS</text>
    <path d="M40 87L166 88.500" stroke="#7b7be8" strokeWidth="4" />
    <path d="M159 32L166 88" stroke="#ff9a9a" strokeWidth="4" />
    <path d="M166 90L160 164" stroke="#6cf56c" strokeWidth="5" />
    <path d="M160 154L157 180" stroke="#3cc43c" strokeWidth="5" />
    <text x="147" y="33" fontSize="26" fill="#ff8f8f" stroke="#ff8f8f">X</text>
    <text x="15" y="96" fontSize="28" fill="#8080f0" stroke="#8080f0">Z</text>
    <text x="147" y="195" fontSize="26" fill="#4fc04f" stroke="#4fc04f">Y</text>
  </CubeOverlay>
);

/* ---------- data ---------- */

const groups = [
  { label: "ERSTELLEN", width: 538, wide: true, tools: [["Skizze", SketchIcon], ["Extrusion", ExtrudeIcon], ["Drehen", RevolveIcon], ["Bohrung", HoleIcon], ["Muster", PatternIcon], ["Form", FormIcon]] },
  { label: "ÄNDERN", width: 538, wide: true, tools: [["Drücken/Ziehen", PressPullIcon], ["Abrunden", FilletIcon], ["Schale", ShellIcon], ["Kombinieren", CombineIcon], ["Teilen", SplitIcon], ["Verschieben", MoveIcon]] },
  { label: "ZUSAMMENFÜGEN", width: 258, tools: [["Neue Komponente", ComponentIcon], ["Gelenk", JointIcon]] },
  { label: "KONSTRUIEREN", width: 228, tools: [["Versatzebene", PlaneIcon]] },
  { label: "PRÜFEN", width: 148, tools: [["Messen", MeasureIcon]] },
  { label: "EINFÜGEN", width: 168, tools: [["Bild", PictureIcon]] },
  { label: "AUSWÄHLEN", width: 208, last: true, selected: true, tools: [["Auswählen", SelectIcon]] },
];

const nodes = [
  { name: "Dokumenteinstellungen", icon: "gear" },
  { name: "Benannte Ansichten", icon: "folder" },
  { name: "Ursprung", icon: "folder", bulb: "off" },
  { name: "Körper", icon: "folder", bulb: "on" },
  { name: "Skizzen", icon: "folder", bulb: "on" },
];

export default function App() {
  return (
    <Page>
      <Global />
      <Defs />
      <TitleBar>
        <AppLogo />
        <Title>Autodesk Fusion 360 (Lizenz für Bildungseinrichtungen)</Title>
        <ButtonCluster $gap={0}>
          <WindowButton aria-label="Minimieren">
            <svg width="20" height="20" viewBox="0 0 20 20"><path d="M0 10H20" stroke="#000" strokeWidth="2" /></svg>
          </WindowButton>
          <WindowButton aria-label="Wiederherstellen">
            <svg width="20" height="20" viewBox="0 0 20 20" fill="none" stroke="#000" strokeWidth="2">
              <path d="M1 5H15V19H1ZM5 5V1H19V15H15" />
            </svg>
          </WindowButton>
          <WindowButton aria-label="Schließen"><CrossIcon size={20} stroke={2} /></WindowButton>
        </ButtonCluster>
      </TitleBar>

      <TabBar>
        <QuickAccess>
          <PlainButton aria-label="Datengruppe"><GridIcon /></PlainButton>
          <PlainButton $gap={12} aria-label="Datei"><FileIcon /><Caret w={14} h={10} /></PlainButton>
          <PlainButton aria-label="Speichern"><SaveIcon /></PlainButton>
          <ButtonCluster $gap={26}>
            <PlainButton $gap={18} aria-label="Rückgängig"><UndoIcon /><Caret w={14} h={10} /></PlainButton>
            <PlainButton $gap={16} $muted aria-label="Wiederholen"><RedoIcon /><Caret w={14} h={10} /></PlainButton>
          </ButtonCluster>
        </QuickAccess>
        <Documents>
          <DocumentTab>
            <DocumentName><DocCube />WM Pokal_final v2</DocumentName>
            <TabClose aria-label="Schließen"><CrossIcon /></TabClose>
          </DocumentTab>
          <DocumentTab $active>
            <DocumentName $active><DocCube active />WM Pokal v1*</DocumentName>
            <TabClose aria-label="Schließen"><CrossIcon /></TabClose>
          </DocumentTab>
          <NewTab aria-label="Neue Konstruktion"><PlusIcon /></NewTab>
        </Documents>
        <Account>
          <PlainButton aria-label="Kommentare"><CommentIcon /></PlainButton>
          <PlainButton aria-label="Auftragsstatus"><ClockIcon /></PlainButton>
          <UserName>Christian Schendera</UserName>
          <PlainButton aria-label="Hilfe"><HelpIcon /></PlainButton>
        </Account>
      </TabBar>

      <Ribbon>
        <Workspace>KONSTRUKTION<Caret w={12} h={9} /></Workspace>
        <RibbonBody>
          <RibbonTabs>
            <RibbonTab $active><TabLabel>BASISELEMENT VOLUMENKÖR...</TabLabel></RibbonTab>
            <RibbonTab>BASISELEMENT FLÄCHE</RibbonTab>
            <RibbonTab>BLECH</RibbonTab>
            <RibbonTab>WERKZEUGE</RibbonTab>
          </RibbonTabs>
          <Groups>
            {groups.map((g) => {
              const Button = g.selected ? SelectedTool : ToolButton;
              return (
                <Group key={g.label} $width={g.width} $wide={g.wide} $last={g.last}>
                  <IconRow $wide={g.wide}>
                    {g.tools.map(([name, Icon]) => (
                      <Button key={name} aria-label={name}><Icon /></Button>
                    ))}
                  </IconRow>
                  <GroupLabel>{g.label}<Caret /></GroupLabel>
                </Group>
              );
            })}
          </Groups>
        </RibbonBody>
      </Ribbon>

      <Viewport>
        <ModelScene />
        <ViewCube />
        <EdgeHandle />
        <Panel $open>
          <button aria-label="Einklappen"><Rewind /></button>
          <PanelTitle>BROWSER</PanelTitle>
          <button aria-label="Minimieren"><RoundSign /></button>
          <Grip />
        </Panel>
        <Tree>
          <TreeRow $root>
            <button aria-label="Zuklappen"><Collapser /></button>
            <Chip $root>
              <button aria-label="Sichtbarkeit"><Bulb on /></button>
              <RootName><BodyCube />WM Pokal v1</RootName>
              <ActiveRadio type="radio" name="active-component" aria-label="Komponente aktivieren" defaultChecked />
            </Chip>
          </TreeRow>
          {nodes.map((n) => (
            <TreeRow key={n.name}>
              <button aria-label="Aufklappen"><Expander /></button>
              <Chip>
                {n.bulb && <IconSlot $center aria-label="Sichtbarkeit"><Bulb on={n.bulb === "on"} /></IconSlot>}
                <IconSlot as="span">{n.icon === "gear" ? <Gear /> : <Folder />}</IconSlot>
                <NodeName>{n.name}</NodeName>
              </Chip>
            </TreeRow>
          ))}
        </Tree>
        <Footer>
          <Panel>
            <PanelTitle $indent>KOMMENTARE</PanelTitle>
            <button aria-label="Kommentar hinzufügen"><RoundSign plus /></button>
            <Grip />
          </Panel>
          <NavBar>
            <NavTools $gap={12}>
              <NavButton $gap={10} aria-label="Orbit"><OrbitIcon /><Caret h={8} /></NavButton>
              <NavButton aria-label="Ansicht"><LookAtIcon /></NavButton>
            </NavTools>
            <NavTools $gap={20}>
              <NavButton aria-label="Pan"><PanIcon /></NavButton>
              <NavButton aria-label="Zoom"><ZoomIcon /></NavButton>
              <NavButton $gap={10} aria-label="Einpassen"><FitIcon /><Caret h={8} /></NavButton>
            </NavTools>
            <NavTools $gap={14} $offset={8}>
              <NavButton $gap={4} aria-label="Anzeige"><DisplayIcon /><Caret h={8} /></NavButton>
              <NavButton $gap={4} aria-label="Raster"><GridSettingsIcon /><Caret h={8} /></NavButton>
              <NavButton $gap={4} aria-label="Ansichtsfenster"><ViewsIcon /><Caret h={8} /></NavButton>
            </NavTools>
          </NavBar>
        </Footer>
      </Viewport>
    </Page>
  );
}
